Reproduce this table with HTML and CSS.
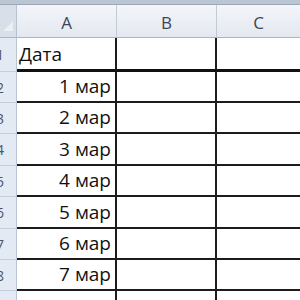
FILE: index.html
```html
<!DOCTYPE html>
<html>
<head>
<meta charset="utf-8">
<link rel="stylesheet" href="styles.css">
</head>
<body>
<div class="band"></div>
<div class="sheet">
  <div class="corner"><span class="tri"></span></div>
  <div class="colhead">A</div>
  <div class="colhead">B</div>
  <div class="colhead last">C</div>

  <div class="rowhead r1"><span>1</span></div>
  <div class="cell a r1 left">Дата</div>
  <div class="cell b r1"></div>
  <div class="cell c r1"></div>

  <div class="rowhead"><span>2</span></div>
  <div class="cell a">1 мар</div>
  <div class="cell b"></div>
  <div class="cell c"></div>

  <div class="rowhead"><span>3</span></div>
  <div class="cell a">2 мар</div>
  <div class="cell b"></div>
  <div class="cell c"></div>

  <div class="rowhead"><span>4</span></div>
  <div class="cell a">3 мар</div>
  <div class="cell b"></div>
  <div class="cell c"></div>

  <div class="rowhead"><span>5</span></div>
  <div class="cell a">4 мар</div>
  <div class="cell b"></div>
  <div class="cell c"></div>

  <div class="rowhead"><span>6</span></div>
  <div class="cell a">5 мар</div>
  <div class="cell b"></div>
  <div class="cell c"></div>

  <div class="rowhead"><span>7</span></div>
  <div class="cell a">6 мар</div>
  <div class="cell b"></div>
  <div class="cell c"></div>

  <div class="rowhead"><span>8</span></div>
  <div class="cell a">7 мар</div>
  <div class="cell b"></div>
  <div class="cell c"></div>

  <div class="rowhead tail"></div>
  <div class="cell a tail"></div>
  <div class="cell b tail"></div>
  <div class="cell c tail"></div>
</div>
</body>
</html>
```
FILE: styles.css
```css
html, body {
  margin: 0;
  padding: 0;
  background: #ffffff;
  overflow: hidden;
  width: 300px;
  height: 300px;
}
body {
  font-family: "Open Sans", "Liberation Sans", sans-serif;
}
.band {
  height: 4px;
  background: #bcc6d2;
  border-bottom: 1px solid #9aa7b8;
}
.sheet {
  display: grid;
  grid-template-columns: 17px 100px 100px 83px;
  grid-template-rows: 33px 34px 31px 31px 32px 31px 32px 31px 31px 9px;
}
.corner {
  background: #d9dfe8;
  border-right: 1px solid #b9c3d0;
  border-bottom: 1px solid #a9b6c6;
  position: relative;
}
.tri {
  position: absolute;
  right: 3px;
  bottom: 6px;
  width: 0;
  height: 0;
  border-left: 10px solid transparent;
  border-bottom: 10px solid #eceff4;
}
.colhead {
  background: linear-gradient(#f3f5f9, #e3e8f0);
  border-right: 1px solid #c3cad4;
  border-bottom: 1px solid #a9b6c6;
  color: #3b4657;
  font-size: 17px;
  display: flex;
  align-items: center;
  justify-content: center;
  padding-top: 2px;
  box-sizing: border-box;
}
.colhead.last {
  border-right: none;
}
.rowhead {
  background: #e4eaf3;
  border-right: 1px solid #b9c5d4;
  border-bottom: 1px solid #c5cfdc;
  overflow: hidden;
  display: flex;
  justify-content: flex-start;
  align-items: center;
  color: #4a5465;
  font-size: 14px;
  box-sizing: border-box;
}
.rowhead span {
  margin-left: -4px;
}
.cell {
  border-bottom: 2px solid #1c1c1c;
  box-sizing: border-box;
  font-size: 19px;
  color: #111;
  display: flex;
  align-items: flex-end;
  justify-content: flex-end;
  padding: 0 4px 2px 4px;
  line-height: 25px;
}
.cell.a, .cell.b {
  border-right: 2px solid #1c1c1c;
}
.cell.left {
  justify-content: flex-start;
  padding-left: 2px;
}
.r1.cell {
  border-bottom: 3px solid #111;
}
.tail {
  border-bottom: none;
}
```
